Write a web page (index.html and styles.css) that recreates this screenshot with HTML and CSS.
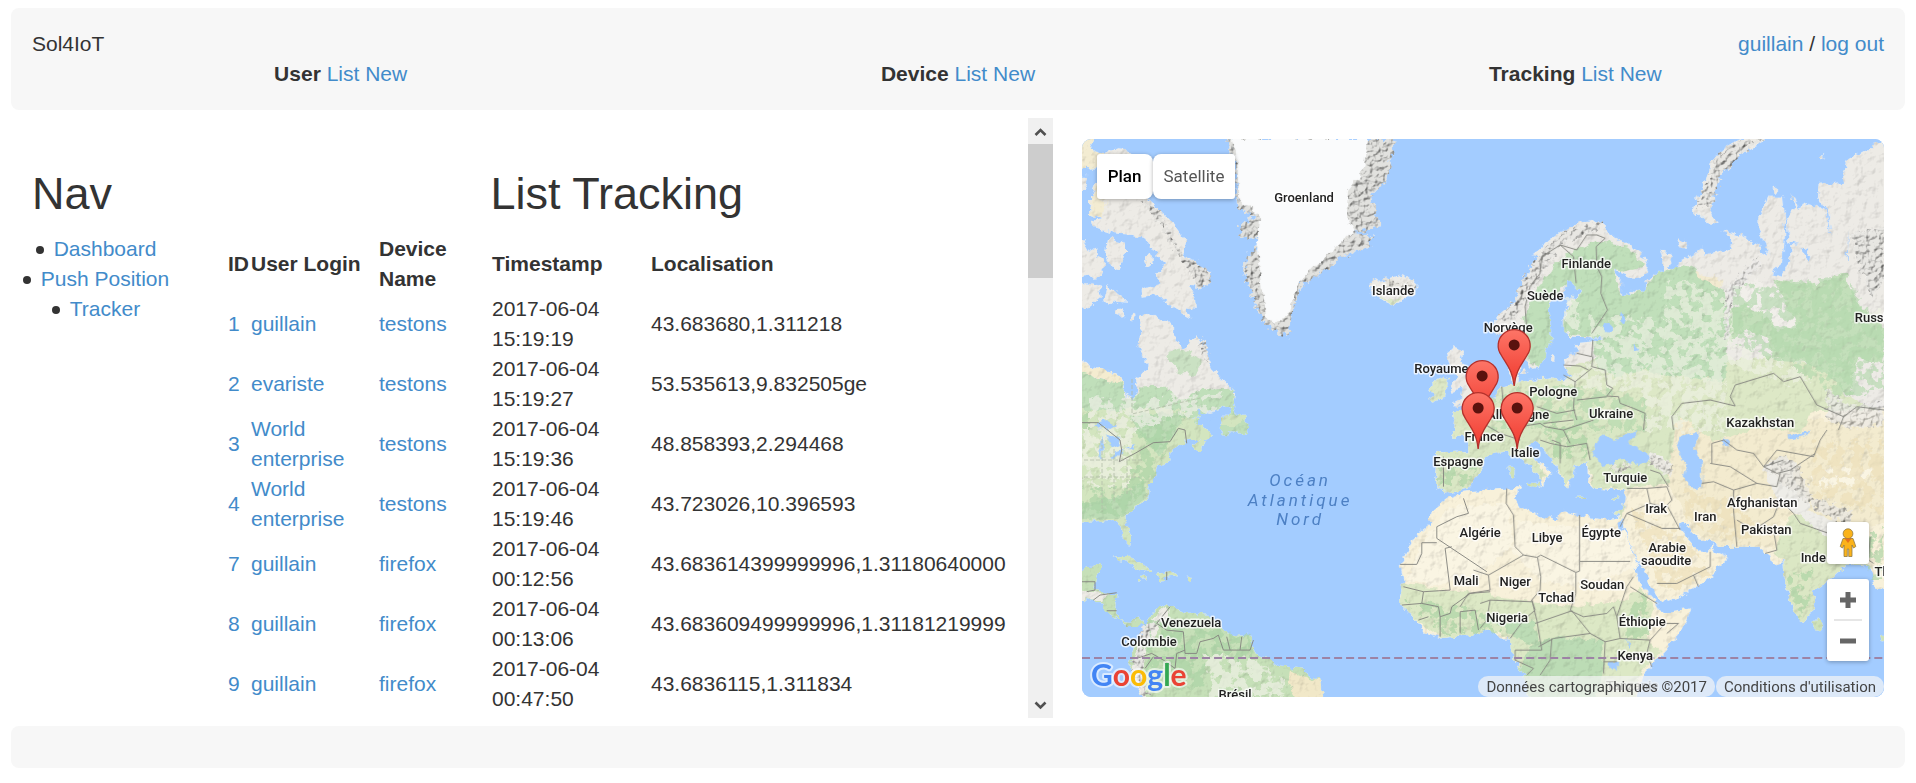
FILE: index.html
```html
<!DOCTYPE html>
<html lang="fr">
<head>
<meta charset="utf-8">
<title>Sol4IoT</title>
<link rel="stylesheet" href="styles.css">
</head>
<body>
<header class="bar header">
  <div class="brand-row">
    <span>Sol4IoT</span>
    <span><a href="#guillain">guillain</a> / <a href="#logout">log out</a></span>
  </div>
  <nav class="menu">
    <div><b>User</b> <a href="#user-list">List</a> <a href="#user-new">New</a></div>
    <div><b>Device</b> <a href="#device-list">List</a> <a href="#device-new">New</a></div>
    <div><b>Tracking</b> <a href="#tracking-list">List</a> <a href="#tracking-new">New</a></div>
  </nav>
</header>

<main class="main">
  <section class="panel">
    <div class="panel-body">
      <nav class="side">
        <h1>Nav</h1>
        <ul>
          <li><a href="#dashboard">Dashboard</a></li>
          <li><a href="#push">Push Position</a></li>
          <li><a href="#tracker">Tracker</a></li>
        </ul>
      </nav>
      <div class="list">
        <h1>List Tracking</h1>
        <table>
          <colgroup><col class="c-id"><col class="c-user"><col class="c-device"><col class="c-time"><col></colgroup>
          <thead><tr><th>ID</th><th>User Login</th><th>Device Name</th><th>Timestamp</th><th>Localisation</th></tr></thead>
          <tbody>
            <tr><td><a href="#t1">1</a></td><td><a href="#u1">guillain</a></td><td><a href="#d1">testons</a></td><td>2017-06-04 15:19:19</td><td>43.683680,1.311218</td></tr>
            <tr><td><a href="#t2">2</a></td><td><a href="#u2">evariste</a></td><td><a href="#d1">testons</a></td><td>2017-06-04 15:19:27</td><td>53.535613,9.832505ge</td></tr>
            <tr><td><a href="#t3">3</a></td><td><a href="#u3">World enterprise</a></td><td><a href="#d1">testons</a></td><td>2017-06-04 15:19:36</td><td>48.858393,2.294468</td></tr>
            <tr><td><a href="#t4">4</a></td><td><a href="#u3">World enterprise</a></td><td><a href="#d1">testons</a></td><td>2017-06-04 15:19:46</td><td>43.723026,10.396593</td></tr>
            <tr><td><a href="#t7">7</a></td><td><a href="#u1">guillain</a></td><td><a href="#d2">firefox</a></td><td>2017-06-04 00:12:56</td><td>43.683614399999996,1.31180640000</td></tr>
            <tr><td><a href="#t8">8</a></td><td><a href="#u1">guillain</a></td><td><a href="#d2">firefox</a></td><td>2017-06-04 00:13:06</td><td>43.683609499999996,1.31181219999</td></tr>
            <tr><td><a href="#t9">9</a></td><td><a href="#u1">guillain</a></td><td><a href="#d2">firefox</a></td><td>2017-06-04 00:47:50</td><td>43.6836115,1.311834</td></tr>
          </tbody>
        </table>
      </div>
    </div>
    <div class="scrollbar" aria-hidden="true">
      <svg class="arrow" viewBox="0 0 25 26"><path d="M7.500 17l5-5 5 5" fill="none" stroke="#505050" stroke-width="2.600"/></svg>
      <div class="thumb"></div>
      <div class="track"></div>
      <svg class="arrow" viewBox="0 0 25 26"><path d="M7.500 10.500l5 5 5-5" fill="none" stroke="#505050" stroke-width="2.600"/></svg>
    </div>
  </section>

  <section class="map-wrap">
    <div class="map">
      <svg class="world" viewBox="0 0 802 558" preserveAspectRatio="xMidYMid slice" role="img" aria-label="Carte">
        <defs>
          <filter id="terrain" x="0" y="0" width="802" height="558" filterUnits="userSpaceOnUse" color-interpolation-filters="sRGB">
            <feTurbulence type="fractalNoise" baseFrequency=".12" numOctaves="3" seed="4" result="n"/>
            <feDisplacementMap in="SourceGraphic" in2="n" scale="9" xChannelSelector="R" yChannelSelector="G" result="land"/>
            <feTurbulence type="fractalNoise" baseFrequency=".09" numOctaves="5" seed="9" result="h"/>
            <feDiffuseLighting in="h" surfaceScale=".8" diffuseConstant="1.16" lighting-color="#fff" result="lit"><feDistantLight azimuth="225" elevation="60"/></feDiffuseLighting>
            <feBlend in="land" in2="lit" mode="multiply" result="m"/>
            <feComposite in="m" in2="land" operator="in"/>
          </filter>
          <filter id="rock" x="0" y="0" width="802" height="558" filterUnits="userSpaceOnUse" color-interpolation-filters="sRGB">
            <feTurbulence type="fractalNoise" baseFrequency=".2" numOctaves="3" seed="2" result="n"/>
            <feDisplacementMap in="SourceGraphic" in2="n" scale="12" xChannelSelector="R" yChannelSelector="G" result="land"/>
            <feDiffuseLighting in="n" surfaceScale="2.200" diffuseConstant="1.150" lighting-color="#fff" result="lit"><feDistantLight azimuth="225" elevation="60"/></feDiffuseLighting>
            <feBlend in="land" in2="lit" mode="multiply" result="m"/>
            <feComposite in="m" in2="land" operator="in"/>
          </filter>
          <filter id="mottle" x="0" y="0" width="802" height="558" filterUnits="userSpaceOnUse" color-interpolation-filters="sRGB">
            <feTurbulence type="fractalNoise" baseFrequency=".1" numOctaves="4" seed="12" result="n"/>
            <feColorMatrix in="n" values="0 0 0 0 1  0 0 0 0 1  0 0 0 0 1  14 0 0 0 -6.200" result="t"/>
            <feDisplacementMap in="SourceGraphic" in2="n" scale="14" xChannelSelector="R" yChannelSelector="G" result="d"/>
            <feComposite in="d" in2="t" operator="in"/>
          </filter>
          <filter id="coast" x="0" y="0" width="802" height="558" filterUnits="userSpaceOnUse">
            <feTurbulence type="fractalNoise" baseFrequency=".12" numOctaves="3" seed="4" result="n"/>
            <feDisplacementMap in="SourceGraphic" in2="n" scale="8" xChannelSelector="R" yChannelSelector="G"/>
          </filter>
          <linearGradient id="red" x1="0" y1="0" x2="0" y2="1"><stop offset="0" stop-color="#fd7567"/><stop offset="1" stop-color="#f0392e"/></linearGradient>
          <g id="pin">
            <path d="M0 0C-1.500-16-8-22-13-31A16 16 0 1 1 13-31C8-22 1.500-16 0 0Z" fill="url(#red)" stroke="#b3312c" stroke-width="1.300"/>
            <circle cy="-41" r="5.500" fill="#5a120e"/>
          </g>
        </defs>
        <rect width="802" height="558" fill="#a3ccff"/>

        <g filter="url(#terrain)">
          <!-- North-west: Canada, Greenland, Iceland -->
          <g transform="translate(-12 -9) scale(.333333)" fill="#edebe6">
            <path fill="#f3ecd2" d="M0 0H90L60 50 100 75 82 110 60 115 0 112Z"/>
            <path d="M100 72L140 58 180 62 190 90 110 100Z"/>
            <path d="M75 165L60 215 58 250 100 265 65 270 70 290 130 310 190 315 225 325 250 365 290 400 262 430 268 460 240 470 212 480 215 500 265 495 300 530 362 566 345 535 380 540 378 500 360 470 395 475 420 430 385 405 340 380 345 330 300 270 240 210 200 165Z"/>
            <path fill="#f3ecd2" d="M75 165L58 250 100 262 110 220 95 190Z"/>
            <path d="M0 330H40L60 365 80 355 85 380 108 400 92 440 0 450ZM115 320L165 335 165 370 150 420 120 410 105 370ZM0 450L90 470 95 500 60 530 0 545ZM110 465L130 480 178 518 140 515 120 530 100 510ZM0 140L52 145 36 190 0 200Z"/>
            <ellipse cx="235" cy="388" rx="13" ry="17"/><ellipse cx="148" cy="548" rx="13" ry="9"/><ellipse cx="188" cy="565" rx="5" ry="10"/>
            <path d="M210 560L250 552 290 575 318 605 320 640 345 658 378 612 400 655 430 720 470 760 495 785 490 825 440 840 380 850 340 870 320 910H0V680L90 715 155 740 165 790 195 805 200 760 192 745 228 720 230 690 205 650 212 600Z"/>
            <path fill="#f4ecd0" d="M0 690L90 715 155 740 158 760 90 745 0 720Z"/>
            <path fill="#c0dfba" d="M0 712L90 748 155 755 165 795 195 805 205 772 290 770 330 810 400 780 492 775 490 825 440 840 340 870 320 910H0ZM490 812L500 850 530 880 532 910H450L455 880 480 850ZM320 910L335 880 385 862 380 910Z"/>
            <path fill="#c0dfba" opacity=".8" d="M290 665L330 655 400 690 375 740 320 725Z"/>
            <path d="M905 445L930 455 965 445 1000 432 1035 460 1035 490 1000 508 965 525 935 512 905 490Z"/>
            <path fill="#dbe8c8" d="M920 500L965 508 1000 500 965 525Z"/>
          </g>
          <!-- Americas, south of 50°N -->
          <g transform="translate(-12 281) scale(.333333)" fill="#d3e5bf">
            <path d="M0-30H345L350-5 385-10 375 10 435 40 380 90 365 80 390 60 350 60 300 100 305 125 260 145 250 185 235 190 235 235 200 260 170 285 170 310 182 345 178 378 160 360 150 315 130 300 60 305 0 320ZM450-10H530L500 15 455 15Z"/>
            <path fill="#bcdcb5" d="M180-20H350L300 60 270 110 240 70 190 20ZM150 230L220 180 230 230 160 290 60 300 0 290V260Z"/>
            <path fill="#c6e0b8" d="M0 490L50 440 95 432 80 480 75 510 140 520 135 570 150 600 175 605 210 595 218 620 245 580 290 555 330 575 420 585 470 640 540 645 560 700 640 740 700 750 750 785 765 860H225L200 790 180 740 195 680 220 650 210 615 170 615 110 575 95 545 0 530Z"/>
            <path fill="#eeece6" d="M0 510L120 520 90 540 0 530ZM250 590L290 560 300 575 225 690 215 760 235 860 200 800 185 740 220 670Z"/>
            <path fill="#f1e8c8" d="M660 750L750 785 765 860H690L655 790Z"/>
            <path d="M130 412L180 410 250 450 220 454 170 425ZM260 462L300 455 330 470 265 479ZM210 473H230V481H210ZM350 473H368V480H350Z"/>
          </g>
          <!-- Northern Europe and Russia -->
          <g transform="translate(398 -9) scale(.333333)" fill="#edebe6">
            <path d="M45 600L50 560 95 525 130 480 150 430 180 380 155 375 200 340 240 310 300 275 340 270 370 295 400 322 450 345 495 380 505 415 495 435 460 445 425 430 400 420 425 455 425 500 445 515 460 510 450 480 490 485 500 455 525 430 545 440 550 400 540 365 570 370 572 395 560 410 590 420 600 395 640 372 665 350 670 375 740 355 760 340 730 300 790 320 835 345 858 378 865 360 835 300 835 270 860 200 905 200 912 260 915 310 905 400 870 430 905 437 930 385 930 345 960 348 980 395 985 360 925 335 918 260 945 235 930 185 960 240 980 265 955 235 990 220 1035 240 1045 290 1055 320 1040 240 1010 200 1015 165 1095 155 1085 120 1100 90 1180 45 1250 30V920H-80L-75 875-20 850 15 830 45 790 60 770 95 765 88 700 115 700 112 760 150 750 215 745 250 752 270 735 250 710 250 685 300 665 280 640 335 634 370 622 270 620 252 605 250 560 265 520 300 480 300 460 260 455 250 490 205 530 200 590 215 620 190 660 180 710 150 715 140 690 120 650 90 650Z"/>
            <path d="M640 240L655 200 690 120 700 80 760 40 850 10 850 35 800 60 745 90 720 125 695 190 690 230 712 285 680 280ZM-100 665L-80 650-50 660-60 690-50 705-40 740-25 770-5 790-15 815-80 830-75 815-60 805-55 775-75 785-85 765-65 740-90 715Z"/>
            <circle cx="608" cy="343" r="12"/><circle cx="884" cy="180" r="9"/><ellipse cx="1028" cy="82" rx="5" ry="9"/><ellipse cx="215" cy="685" rx="5" ry="10"/><ellipse cx="130" cy="725" rx="10" ry="7"/>
            <path fill="#dde8c6" d="M-80 920L-75 875-20 850 15 830 45 790 60 770 95 765 115 755 215 745 250 752 270 735 255 710 340 690 560 730 740 690 860 680 1060 720 1100 800 1212 850 1250 920ZM-140 755L-115 740-95 745-100 775-105 802-140 818-150 810-140 790-152 775Z"/>
            <path fill="#c0dfba" d="M180 460L240 380 350 335 440 350 500 410 430 425 400 420 425 500 490 480 530 430 620 400 660 440 730 480 735 530 740 640 740 750 560 740 500 720 400 740 340 700 340 634 370 622 270 615 252 600 255 550 300 480 262 455 205 530 215 620 180 710 150 700 130 560Z"/>
            <path fill="#f1efea" d="M760 480L830 440 900 520 960 580 900 610 860 560 800 530Z"/>
            <path fill="#c3dfba" d="M745 540L800 520 860 560 890 600 950 590 900 480 880 450 1000 465 1095 430 1130 520 1212 590V700L1130 690 1110 800 1060 750 980 700 880 690 860 620 800 600 745 640Z"/>
            <path fill="#f2ead0" d="M640 425L730 450 720 475 650 440Z"/>
          </g>
          <!-- Africa, Middle East, southern Asia -->
          <g transform="translate(398 281) scale(.333333)" fill="#f8f1da">
            <path d="M-80-30L-75 5-45 35-35 75-35 95-70 92-135 95-130 150-135 195-120 205-90 215-35 205-20 180 5 150 18 110 40 95 80 93 100 85 120 115 150 140 185 180 175 205 195 190 200 170 215 160 165 115 140 75 140 55 165 60 185 80 225 130 235 160 260 205 275 190 265 165 285 140 320 130 325 185 345 205 400 210 440 205 435 240 420 290 375 300 300 285 250 270 235 300 190 290 120 260 105 235 120 200 90 205 0 210-50 215-95 232-145 270-150 310-190 345-215 390-238 435-230 480-240 530-235 555-195 600-165 640-118 655-55 645 0 632 35 630 60 655 95 655 105 690 100 720 140 765 150 860H460L490 760 560 690 610 620 633 565 590 570 545 580 520 540 475 480 455 420 420 350 415 310 427 297 440 350 480 430 510 490 530 530 540 550 600 530 650 500 700 460 740 420 735 405 705 395 695 375 685 395 650 390 630 365 600 330 600 310 625 320 660 360 700 370 720 380 830 380 870 410 880 440 910 425 915 490 940 570 965 610 1000 560 1005 510 1060 470 1095 440 1165 430 1180 480 1190 510 1250 500V-30Z"/>
            <path fill="#d9e7c4" d="M-80-30L-75 5-45 35-35 75-35 95-70 92-135 95-130 150-135 195-120 205-90 215-35 205-20 180 5 150 18 110 80 93 120 115 150 140 185 180 200 170 165 115 140 75 165 60 225 130 260 205 285 140 320 130 345 205 440 205 560 190 600 150 590 60 680-30Z"/>
            <path fill="#f3ebcf" d="M590 0H1250V300L1100 330 960 280 900 300 890 380 720 380 640 330 600 250 560 190Z"/>
            <path fill="#dbe7c4" d="M600-30H1000L960 40 850 20 700 60 640 20ZM940 280L1050 330 1180 350 1165 430 1095 440 1060 470 1005 510 1000 560 965 610 940 570 915 490 910 425 880 400 900 330ZM430 250L400 280 425 295Z"/>
            <path fill="#dce8c5" d="M-235 490L-100 510 20 520 100 540 280 560 430 540 480 500 520 560 500 650 540 700 480 760 460 860H150L140 765 100 720 95 655 35 630-55 645-118 655-195 600-240 550Z"/>
            <path fill="#bcdcb5" d="M150 680L220 650 370 660 370 760 340 860H160L120 740ZM60 610L160 600 180 680 100 650Z"/>
            <path fill="#faf5e3" d="M-90 260L80 250 100 380 0 460-130 500-220 480-180 380ZM980 170L1060 140 1180 150 1140 190 1020 210ZM110 300L290 320 430 330 480 440 290 500 180 480 100 400Z"/>
            <path fill="#cfe2b9" d="M85 140H103V170H85ZM140 186L178 184 172 205ZM290 230H318V236H290ZM396 234L415 230 412 240 398 242Z"/>
            <ellipse cx="1012" cy="612" rx="12" ry="20" fill="#cfe2b9"/><circle cx="1208" cy="655" r="9" fill="#cfe2b9"/>
            <path fill="#eeede8" d="M850 140L900 110 950 130 940 180 990 240 980 270 1100 320 1040 350 960 290 890 240ZM510 95L580 130 570 160 500 120Z"/>
          </g>
        </g>

        <!-- Vegetation speckle -->
        <g filter="url(#mottle)" opacity=".65">
          <g transform="translate(398 -9) scale(.333333)"><path fill="#eef1e3" d="M330 560L740 560V900H250V760L340 700ZM560 440L740 500V560H560ZM740 540H1210V760H900L740 700ZM260 500H300V600H260Z"/><path fill="#b4d8ae" d="M760 470L1100 440 1212 600V780L1080 800 900 690 760 640ZM30 800L250 760 500 800V900H0Z"/></g>
          <g transform="translate(-12 281) scale(.333333)"><path fill="#a9d3a4" d="M40-20H340L250 180 160 280H40ZM230 600L540 650 560 720 340 820 230 760Z"/><path fill="#f3f3ea" d="M400 700L560 720 650 780 640 831H420ZM40 30H200L180 200H40Z"/></g>
          <g transform="translate(-12 -9) scale(.333333)"><path fill="#f1f0ea" d="M60 800L200 810 460 790 440 840 320 860 200 900H60Z"/></g>
          <g transform="translate(398 281) scale(.333333)"><path fill="#a9d2a2" d="M-230 540L-50 560 80 600 60 630-110 640ZM450 560L500 520 510 640 440 660ZM920 460L1000 440 990 540 960 600ZM1160 350L1212 320V480H1180ZM-120 110L0 130-40 200-120 190ZM200 0L330 20 320 110 230 120Z"/><path fill="#ecdfb8" d="M610 200L740 240 880 350 720 360 620 300ZM1000 60L1212 60V280L1000 230ZM450 260L590 330 700 460 560 520 500 400Z"/></g>
        </g>

        <!-- Mountain relief -->
        <g filter="url(#rock)">
          <path fill="#e2e2df" d="M145 0H313L308 25 303 45 288 55 298 88 272 94 293 97 284 110 258 118 245 131 221 145 216 158 210 175 206 197 199 195 185 188 176 171 168 151 162 131 165 115 175 110 176 100 158 98 158 86 173 78 155 70 154 31Z"/>
          <path fill="#e4e3df" d="M58 62L75 70 92 100 103 118 125 130 128 143 117 150 105 128 95 115 82 90Z"/>
          <path fill="#e8e7e3" d="M118 200L124 205 128 222 120 220ZM410 190L430 165 450 125 478 95 520 82 515 92 480 105 462 130 445 160 432 180ZM614 70L624 45 634 18 660 0H680L665 10 640 35 630 65ZM770 95L802 88V140L790 160 775 125ZM60 490L75 480 62 510 60 540 68 556 60 556 52 530 56 505Z"/>
          <path fill="#e6e4dc" opacity=".85" d="M682 328L700 316 715 325 730 358 770 372 765 385 740 375 715 355 700 345ZM570 314L590 326 588 338 568 326ZM530 328L548 324 550 330 532 334Z"/>
          <path fill="#e4e3df" opacity=".7" d="M645 150L675 118 678 125 650 158 646 200 643 200ZM744 250L770 268 802 262V285L770 290 745 280Z"/>
          <path fill="#e5e3dc" d="M302 137L318 145 332 143 332 149 304 150Z"/>
        </g>
        <path filter="url(#coast)" fill="#fafbfc" d="M150 0H286L283 25 276 38 266 52 264 78 272 92 250 112 232 128 219 142 212 155 206 175 192 186 184 178 181 152 175 112 178 78 156 58 155 15Z"/>

        <!-- Lakes and inland seas -->
        <g filter="url(#coast)" fill="#a3ccff">
          <g transform="translate(398 281) scale(.333333)">
            <path d="M335 110L350 60 375 40 400 60 470 30 470 50 440 70 500 95 510 120 480 132 430 120 370 135ZM585 80L600 50 650 30 655 60 640 85 665 130 665 205 625 200 610 170 620 140ZM920 50L990 35 985 45 930 58ZM728 55L745 60 740 80 730 75ZM385 725H410V748H388ZM437 655L447 680 442 684Z"/>
          </g>
          <g transform="translate(398 -9) scale(.333333)"><path d="M368 575L395 590 395 612 375 610ZM425 545L440 570 430 588 420 575ZM463 640L480 660 465 665ZM1105 300L1102 390 1098 390Z"/></g>
          <g transform="translate(-12 281) scale(.333333)"><path d="M70 15L110 0 135 15 115 28 85 28ZM88 60L100 45 98 120 90 120ZM108 40L145 55 150 75 128 85 115 65ZM125 105L160 92 158 102 130 115ZM160 85L195 75 190 85ZM380-30L440-5 400 0Z"/></g>
        </g>

        <!-- Country borders -->
        <g fill="none" stroke="#858580" stroke-width="2.800" stroke-linejoin="round">
          <g transform="translate(398 281) scale(.333333)">
            <path d="M80 205L78 250 100 285 105 380 130 405 170 412 182 405 287 457 287 520M130 405L25 465-20 450M25 465L30 510-35 520-60 560M298 285V424H450M298 424V453L287 457M172 412L182 470 180 510 155 540 165 570 130 600 90 655M30 540L155 545M155 540L170 600 185 690 105 690M165 610L275 572 330 640 220 655 175 680M287 520L270 572 310 590 380 580 400 560 410 590 440 500 460 470M410 590L420 655 375 665 330 640M420 655L510 660 500 700 515 740M375 665L370 760M370 725L410 725M510 660L555 610 595 610 560 640M450 500L530 550M105 690L105 720 160 745 140 765M215 655L210 720 180 765M0 550L30 540 20 600 0 625"/>
            <path d="M440 205L500 205 560 200 575 240 560 255 600 330M500 205L510 250 440 280 420 320M510 250L545 260M440 280L545 325 600 325M530 490L590 490 640 465 690 440 690 395M640 465L655 500M565 200L540 160 510 150M665 190L700 185 760 210 760 270 770 380M760 210L830 190 890 200 900 160M770 300L820 330 880 290 900 240 940 280M880 330L890 390 855 400M940 280L960 310 1060 345M695 130V70L730 60 770 90 820 100 850 140 910 120M850 140L890 90 1000 110 1020 60 1040 30M830 190L750 140 690 130M1005 100L930 150 890 160 850 140M1170 350L1165 420 1180 430M195 20L250 30 340 0M215 60L240 70 240 130M180 60L210 70 260 80 320 70 330 120M0 5L60 40 120 60M250 30L270 70M120 20L180 10 195 20"/>
          </g>
          <g transform="translate(398 -9) scale(.333333)">
            <path d="M140 600L135 530 150 470 180 430 185 380 240 345 280 380 288 460M240 345L290 360 320 315 350 315 375 325 348 350 350 410 365 440 362 490 382 540 335 610M290 670L335 680 338 630M338 680L335 710 375 720 380 765 398 775 380 798 415 800M250 705L300 708 325 720M250 735L285 755 335 715M285 755L280 835 290 870M290 810L380 800M415 800L420 820 460 835 495 850 490 900M580 900L575 860 605 820 690 810 765 828 750 800 765 765 880 730 910 755 960 740 1010 825 1090 860 1130 830 1212 840M1090 860L1075 900M170 830L230 850 285 840M190 880L280 870M65 770L70 830 40 860"/>
          </g>
          <g transform="translate(-12 281) scale(.333333)">
            <path d="M36 8L85 8 150 60 155 90 148 125 195 100 250 68 300 65 325 25 345 30 350 70M1100 355L1250 455M1100 355V320L1160 290 1195 280 1180 235M1100 368H1055V400L1040 433H990M1125 385L1140 510 1060 515 1000 500M1125 385L1145 380M1060 515L1055 550 995 555M1055 550L1105 560 1110 590 1140 580 1145 560 1200 520 1260 515M1110 590V650M1170 640V575L1215 570 1225 630M1045 600L1075 590M36 485H75V510L50 515M70 540L90 525 140 518M110 572L140 572M300 560L260 610 290 630 340 635 345 700 380 700 390 665 430 655 445 645 460 690 510 690 540 690 550 660M470 650L480 690M515 650L510 690M345 690L320 700 315 745 280 720 245 700 200 715M250 710L225 745M290 455V480M1120 110V200"/>
          </g>
        </g>
        <g fill="none" stroke="#b3bda8" stroke-width=".800" stroke-dasharray="4 2"><path d="M2 321H62M2 338H58M20 300V372M32 310V362M45 322V355M50 240V275L118 259"/></g>
        <path d="M0 519H802" stroke="#9d83a5" stroke-width="2" stroke-dasharray="8 4"/>

        <g class="sea">
          <text x="218" y="347">Océan</text><text x="218" y="367">Atlantique</text><text x="218" y="386">Nord</text>
        </g>
        <g class="places">
          <text x="222" y="63">Groenland</text><text x="311" y="156">Islande</text><text x="371" y="234">Royaume-Uni</text>
          <text x="426" y="193">Norvège</text><text x="463" y="161">Suède</text><text x="504" y="129">Finlande</text>
          <text x="471" y="257">Pologne</text><text x="529" y="279">Ukraine</text><text x="678" y="288">Kazakhstan</text>
          <text x="792" y="183">Russie</text><text x="436" y="280">Allemagne</text><text x="402" y="302">France</text>
          <text x="443" y="318">Italie</text><text x="376" y="327">Espagne</text><text x="543" y="343">Turquie</text>
          <text x="574" y="374">Irak</text><text x="623" y="382">Iran</text><text x="680" y="368">Afghanistan</text>
          <text x="684" y="395">Pakistan</text><text x="731" y="423">Inde</text><text x="821" y="437">Thaïlande</text>
          <text x="465" y="403">Libye</text><text x="519" y="398">Égypte</text><text x="585" y="413">Arabie</text><text x="584" y="426">saoudite</text>
          <text x="398" y="398">Algérie</text><text x="384" y="446">Mali</text><text x="433" y="447">Niger</text>
          <text x="520" y="450">Soudan</text><text x="474" y="463">Tchad</text><text x="425" y="483">Nigeria</text>
          <text x="560" y="487">Éthiopie</text><text x="553" y="521">Kenya</text><text x="550" y="551" opacity=".6">Tanzanie</text>
          <text x="109" y="488">Venezuela</text><text x="67" y="507">Colombie</text><text x="153" y="560">Brésil</text>
        </g>
        <use href="#pin" x="432" y="247"/><use href="#pin" x="400" y="278"/><use href="#pin" x="396" y="310"/><use href="#pin" x="435" y="310"/>
        <text class="logo" x="9" y="547"><tspan fill="#4285f4">G</tspan><tspan fill="#ea4335">o</tspan><tspan fill="#fbbc05">o</tspan><tspan fill="#4285f4">g</tspan><tspan fill="#34a853">l</tspan><tspan fill="#ea4335">e</tspan></text>
      </svg>

      <div class="map-type">
        <button type="button" class="on">Plan</button><button type="button">Satellite</button>
      </div>
      <div class="map-tools">
        <button type="button" class="tool peg" aria-label="Street View">
          <svg width="18" height="30" viewBox="0 0 18 30"><path d="M4 10.500h10l2.800 8-2.300 1.500-1.500-3V28.500h-3.300V21H8.300v7.500H5V17l-1.500 3-2.300-1.500Z" fill="#fbb31a" stroke="#8f7a45" stroke-width=".800"/><circle cx="9" cy="5.700" r="4.900" fill="#fbb31a" stroke="#8f7a45" stroke-width=".800"/><path d="M5.500 10.500h7L9 15Z" fill="#e5721c"/></svg>
        </button>
        <div class="zoom">
          <button type="button" class="tool" aria-label="Zoom avant"><svg width="16" height="16" viewBox="0 0 16 16"><path d="M0 5.500h5.500V0h5v5.500H16v5h-5.500V16h-5v-5.500H0Z" fill="#666"/></svg></button>
          <button type="button" class="tool" aria-label="Zoom arrière"><svg width="16" height="16" viewBox="0 0 16 16"><path d="M0 5.500h16v5H0Z" fill="#666"/></svg></button>
        </div>
      </div>
      <div class="credits"><span>Données cartographiques ©2017</span><a href="#conditions">Conditions d'utilisation</a></div>
    </div>
  </section>
</main>

<footer class="bar footer"></footer>
</body>
</html>
```
FILE: styles.css
```css
* { box-sizing: border-box; }

body {
  margin: 0;
  height: 100vh;
  min-height: 480px;
  padding: 8px 11px 15px;
  display: flex;
  flex-direction: column;
  gap: 8px;
  background: #fff;
  color: #333;
  font: 21px/30px "Liberation Sans", Arial, sans-serif;
}

a { color: #428bca; text-decoration: none; }
h1 { margin: 0; font-size: 45px; font-weight: 400; line-height: 50px; }

.bar { background: #f7f7f7; border-radius: 8px; }
.header { padding: 21px; }
.brand-row { display: flex; justify-content: space-between; }
.menu { display: grid; grid-template-columns: repeat(3, 1fr); text-align: center; }
.footer { flex: none; height: 42px; }

.main { flex: 1; min-height: 0; display: flex; gap: 8px; }

.panel { flex: 0 0 55%; display: flex; min-width: 0; }
.panel-body {
  flex: 1;
  min-width: 0;
  display: flex;
  gap: 49px;
  padding: 51px 21px 0;
  overflow: hidden;
}
.side { flex: 0 0 146px; }
.side ul { margin: 15px 0 0; padding: 0; list-style: none; text-align: center; }
.side li::before {
  content: "";
  display: inline-block;
  width: 8px;
  height: 8px;
  margin: 0 10px 0 -18px;
  border-radius: 50%;
  background: #333;
  vertical-align: middle;
}
.list { flex: 1; min-width: 0; }
.list h1 { text-align: center; }

table {
  width: 100%;
  margin-top: 15px;
  border-collapse: collapse;
  table-layout: fixed;
}
th, td { padding: 0 1px; text-align: left; vertical-align: middle; }
td:last-child { white-space: nowrap; }
.c-id { width: 23px; }
.c-user { width: 128px; }
.c-device { width: 113px; }
.c-time { width: 159px; }

.scrollbar {
  flex: 0 0 25px;
  display: flex;
  flex-direction: column;
  background: #f0f0f0;
}
.arrow { flex: none; width: 25px; height: 26px; }
.thumb { flex: 0 0 134px; background: #cdcdcd; }
.track { flex: 1; }

.map-wrap { flex: 1; min-width: 0; padding: 21px; display: flex; }
.map {
  position: relative;
  flex: 1;
  overflow: hidden;
  border-radius: 9px;
  background: #a3ccff;
  font-family: Roboto, sans-serif;
}
.world { display: block; width: 100%; height: 100%; }
.world text { text-anchor: middle; }
.places {
  font-size: 13px;
  font-weight: 500;
  fill: #222;
  stroke: rgba(255, 255, 255, .75);
  stroke-width: 3px;
  stroke-linejoin: round;
  paint-order: stroke;
}
.sea { font-size: 17px; font-style: italic; letter-spacing: 3px; fill: #4d80c4; }
.world .logo {
  text-anchor: start;
  font: 700 30px Lato, sans-serif;
  stroke: rgba(255, 255, 255, .6);
  stroke-width: 4px;
  stroke-linejoin: round;
  paint-order: stroke;
}

.map button {
  border: 0;
  background: #fff;
  font: 17px/21px Roboto, sans-serif;
  color: #565656;
}
.map-type {
  position: absolute;
  top: 15px;
  left: 15px;
  display: flex;
}
.map-type button {
  padding: 12px 11px;
  border-radius: 8px 3px 3px 8px;
  box-shadow: 0 1px 4px rgba(0, 0, 0, .3);
}
.map-type .on { border-radius: 3px 8px 8px 3px; font-weight: 500; color: #000; }

.map-tools {
  position: absolute;
  right: 15px;
  bottom: 36px;
  display: flex;
  flex-direction: column;
  gap: 15px;
}
.map .tool {
  display: grid;
  place-items: center;
  width: 42px;
  height: 41px;
  padding: 0;
  border-radius: 3px;
}
.map .peg { height: 42px; box-shadow: 0 1px 4px rgba(0, 0, 0, .3); }
.zoom {
  border-radius: 3px;
  background: linear-gradient(#e6e6e6, #e6e6e6) center / 28px 2px no-repeat #fff;
  box-shadow: 0 1px 4px rgba(0, 0, 0, .3);
}
.map .zoom .tool { background: none; }

.credits {
  position: absolute;
  right: 0;
  bottom: 0;
  display: flex;
  gap: 1px;
  font-size: 15px;
  line-height: 20px;
}
.credits > * {
  padding: 1px 8px 0;
  border-radius: 10px;
  background: rgba(245, 245, 245, .7);
  color: #444;
}
```
